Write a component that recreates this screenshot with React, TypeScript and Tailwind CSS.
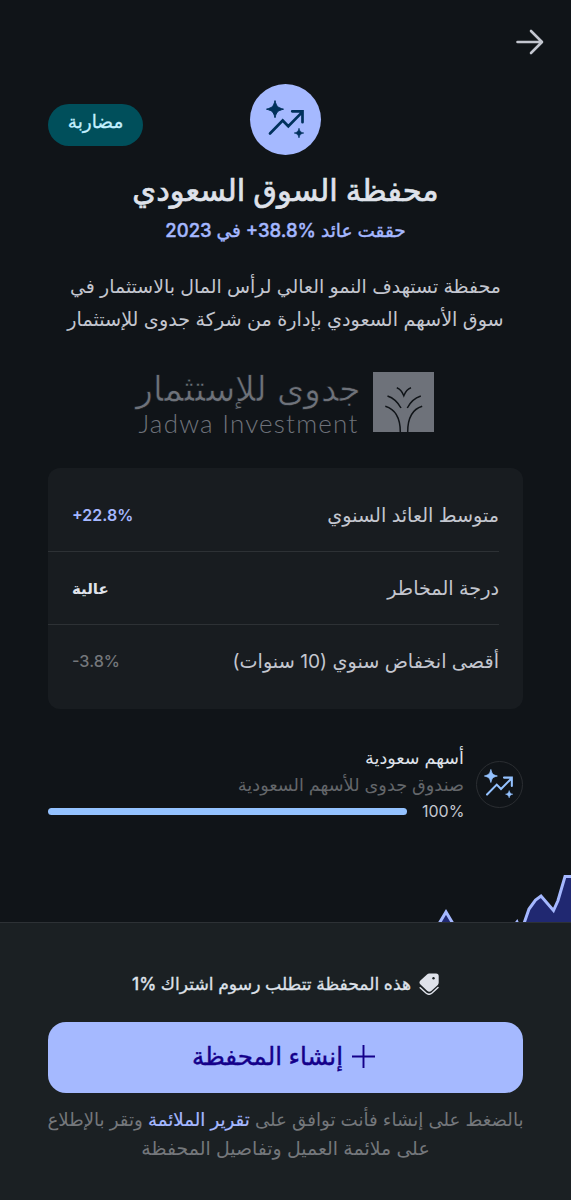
import { ReactNode } from "react";

const stats = [
  {
    label: "متوسط العائد السنوي",
    value: "+22.8%",
    valueClass: "text-[16px] font-semibold text-[#a5b8ff]",
  },
  {
    label: "درجة المخاطر",
    value: "عالية",
    valueClass: "pt-0.5 text-[15px] font-bold text-[#dfe2ea]",
  },
  {
    label: "أقصى انخفاض سنوي (10 سنوات)",
    value: "-3.8%",
    valueClass: "text-[16.2px] font-medium text-[#74777b]",
  },
];

const Line = ({ className, children }: { className: string; children: ReactNode }) => (
  <div className={`flex justify-center whitespace-nowrap ${className}`}>
    <span>{children}</span>
  </div>
);

const TrendIcon = ({ className }: { className: string }) => (
  <svg viewBox="0 0 40 40" fill="none" className={className}>
    <path
      d="M9 .6c1.500 5.900 2.500 6.900 8.500 8.600C11.500 10.800 10.500 11.800 9 17.700 7.500 11.800 6.500 10.800.5 9.200 6.500 7.500 7.500 6.500 9 .6Z"
      fill="currentColor"
      stroke="currentColor"
      strokeWidth="1"
      strokeLinejoin="round"
    />
    <path
      d="M33 28.200c.9 3.400 1.500 4 4.800 4.800-3.300.9-3.900 1.500-4.800 4.900-.9-3.400-1.500-4-4.800-4.900 3.300-.8 3.900-1.400 4.800-4.800Z"
      fill="currentColor"
      stroke="currentColor"
      strokeWidth=".6"
      strokeLinejoin="round"
    />
    <path
      d="M4 33.500 16.700 20.500l5.600 5.800L36.200 12.100M26.200 11.300h10.300v10.900"
      stroke="currentColor"
      strokeWidth="2.700"
      strokeLinecap="round"
      strokeLinejoin="miter"
    />
  </svg>
);

const PalmMark = () => (
  <svg viewBox="0 0 61 60" fill="none" className="h-[60px] w-[61px]">
    <path d="M0 0h61v60H0z" fill="#6e727a" />
    <g stroke="#101418" strokeWidth="1.5">
      <path d="M23.800 15.800c3.500 1.200 5.500 4.200 7 8 1.500-3.800 3.600-6.800 7.200-8" />
      <path d="M14.500 24c6 2 10.500 6.500 13.500 12M47.800 24c-6 2-10.800 6.500-13.500 12" />
      <path d="M12.300 34.300c10 3 15 12 15 25.700M49.200 34.300c-10 3-14.500 12-14.500 25.700" />
    </g>
  </svg>
);

const JadwaLogo = () => (
  <div className="flex h-[60px] justify-center gap-[13px]">
    <PalmMark />
    <div className="flex w-[223px] flex-col text-[#6e727a]">
      <div className="flex h-[34px] items-center justify-center whitespace-nowrap text-[34.5px] font-extralight leading-[34px] [-webkit-text-stroke:0.6px_#101418]">
        جدوى للإستثمار
      </div>
      <div
        dir="ltr"
        className="mt-[2px] flex h-[30px] items-center justify-center whitespace-nowrap font-['Lato',sans-serif] text-[26px] font-light leading-[30px] tracking-[1.2px]"
      >
        Jadwa Investment
      </div>
    </div>
  </div>
);

const TagIcon = () => (
  <svg viewBox="0 0 20 22" className="h-[22px] w-5">
    <path
      d="M10.300.4h6.700a2.700 2.700 0 0 1 2.700 2.700v6.500c0 .9-.3 1.700-.9 2.300l-6.300 5.800a3.200 3.200 0 0 1-4.400 0l-6.600-6.200a2.700 2.700 0 0 1-.1-3.900L8 1.400c.6-.6 1.400-1 2.300-1Z"
      fill="#dfe2ea"
    />
    <circle cx="14.500" cy="5.200" r="1.200" fill="#1b2023" />
    <path
      d="M1.200 14.800 7 20c1.800 1.500 4.200 1.500 6 0l6-5.500"
      fill="none"
      stroke="#dfe2ea"
      strokeWidth="1.500"
      strokeLinecap="round"
    />
  </svg>
);

const Stats = () => (
  <section className="mx-12 mt-9 h-[241px] rounded-xl bg-[#181c20] pt-[11px]">
    {stats.map((stat, index) => (
      <div key={stat.label} className="ms-6">
        <div className="flex h-[72px] items-center justify-between pe-6 whitespace-nowrap">
          <span className="text-[19.2px] text-[#c3c6cf]">{stat.label}</span>
          <span dir="ltr" className={stat.valueClass}>
            {stat.value}
          </span>
        </div>
        {index < stats.length - 1 && <div className="h-px bg-[#2d3135]" />}
      </div>
    ))}
  </section>
);

const Fund = () => (
  <section className="mx-12 mt-[36px] flex gap-3">
    <div className="mt-[16px] flex size-[47px] shrink-0 items-center justify-center rounded-full border border-[#2b2e32] text-[#94c2ff]">
      <TrendIcon className="size-[30.5px]" />
    </div>
    <div className="flex flex-1 flex-col whitespace-nowrap">
      <div className="h-[26px] text-[17.6px] leading-[26px] text-[#dfe2ea]">أسهم سعودية</div>
      <div className="h-[27px] text-[17.7px] leading-[27px] text-[#63666a]">
        صندوق جدوى للأسهم السعودية
      </div>
      <div className="flex h-[26px] items-center gap-[15px]">
        <span dir="ltr" className="w-[42px] text-[16px] text-[#c3c6cf]">
          100%
        </span>
        <div className="h-[7px] flex-1 rounded-full bg-[#94c2ff]" />
      </div>
    </div>
  </section>
);

const Chart = () => (
  <svg viewBox="0 0 571 50" fill="none" className="mt-auto h-[50px] w-full shrink-0">
    <path
      d="M428 70 446 40 464 70M505 66l12-16 4 10 8-23 6.500-9 5.500-4 12.500 14.500 4.500-10 7-24h15V66Z"
      fill="#202871"
      stroke="#a5b8ff"
      strokeWidth="3"
    />
  </svg>
);

export default function App() {
  return (
    <main
      dir="rtl"
      className="flex h-[1200px] w-[571px] flex-col overflow-hidden bg-[#101418] font-['Inter','DejaVu_Sans',sans-serif] text-[#dfe2ea]"
    >
      <header className="flex h-[84px] shrink-0 items-center ps-[27px]">
        <svg viewBox="0 0 28 26" fill="none" className="h-[26px] w-7">
          <path
            d="M1.500 13h24M15 2l11 11-11 11"
            stroke="#c3c6cf"
            strokeWidth="2.600"
            strokeLinecap="round"
            strokeLinejoin="round"
          />
        </svg>
      </header>

      <div className="grid h-[71px] grid-cols-3 px-12">
        <div />
        <div className="flex size-[71px] items-center justify-center justify-self-center rounded-full bg-[#a5b9ff] text-[#00315c]">
          <TrendIcon className="size-10" />
        </div>
        <div className="mt-5 flex h-[42px] w-[95px] justify-center justify-self-end rounded-full bg-[#004f5b] pt-[3px] text-[18.5px] leading-[28px] text-[#c2efff] [-webkit-text-stroke:0.3px_#c2efff]">
          مضاربة
        </div>
      </div>

      <h1 className="mt-[13px]">
        <Line className="h-[44px] text-[30.5px] font-medium leading-[44px] [-webkit-text-stroke:0.7px_#dfe2ea]">
          محفظة السوق السعودي
        </Line>
      </h1>
      <Line className="mt-[3px] h-[30px] text-[18.5px] font-medium leading-[30px] text-[#a5b8ff] [-webkit-text-stroke:0.4px_#a5b8ff]">
        حققت عائد <bdi dir="ltr">+38.8%</bdi> في 2023
      </Line>

      <div className="mt-[25px] leading-[33px] text-[#c3c6cf]">
        <Line className="h-[33px] text-[18.9px]">
          محفظة تستهدف النمو العالي لرأس المال بالاستثمار في
        </Line>
        <Line className="h-[33px] text-[19.2px]">
          سوق الأسهم السعودي بإدارة من شركة جدوى للإستثمار
        </Line>
      </div>

      <div className="mt-[36px]">
        <JadwaLogo />
      </div>
      <Stats />
      <Fund />
      <Chart />

      <footer className="flex h-[278px] shrink-0 flex-col border-t border-[#2d3135] bg-[#1b2023] px-12">
        <div className="mt-[46px] flex h-[30px] items-center justify-center gap-2 whitespace-nowrap text-[17.2px] font-medium">
          <TagIcon />
          <span className="[-webkit-text-stroke:0.3px_#dfe2ea]">
            هذه المحفظة تتطلب رسوم اشتراك <bdi dir="ltr">1%</bdi>
          </span>
        </div>
        <button className="mt-[23px] flex h-[71px] shrink-0 items-center justify-center gap-[9px] rounded-[18px] bg-[#a5b9ff] ps-1 pb-0.5 text-[24.5px] font-medium text-[#14008a]">
          <svg viewBox="0 0 24 24" className="size-[23px]" stroke="currentColor" strokeWidth="2">
            <path d="M12 0v24M0 12h24" />
          </svg>
          <span className="[-webkit-text-stroke:0.4px_#14008a]">إنشاء المحفظة</span>
        </button>
        <div className="mt-[11px] leading-[30px] text-[#74777b]">
          <Line className="h-[30px] text-[18.2px]">
            بالضغط على إنشاء فأنت توافق على{" "}
            <a className="text-[#a5b8ff] [-webkit-text-stroke:0.2px_#a5b8ff]">تقرير الملائمة</a> وتقر
            بالإطلاع
          </Line>
          <Line className="h-[30px] text-[18.9px]">على ملائمة العميل وتفاصيل المحفظة</Line>
        </div>
      </footer>
    </main>
  );
}
